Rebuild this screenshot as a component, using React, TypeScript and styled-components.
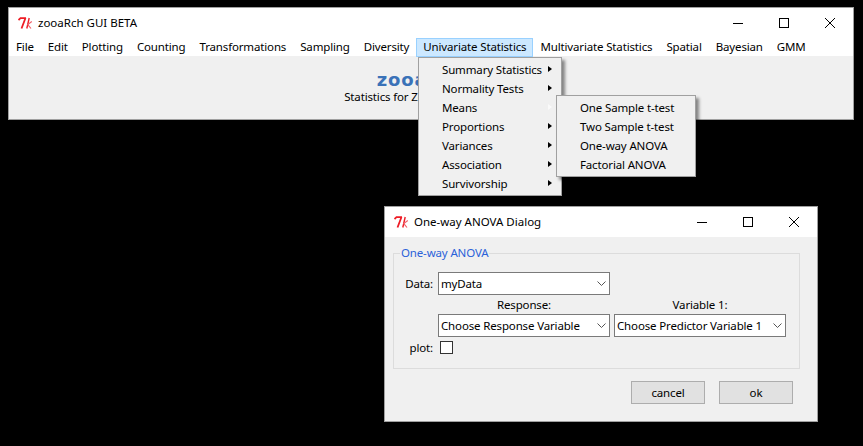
import React from 'react';
import styled, { createGlobalStyle } from 'styled-components';

const GlobalStyle = createGlobalStyle`
  html, body {
    margin: 0;
    background: #000;
  }
  body {
    font-family: "Noto Sans", "Open Sans", sans-serif;
    font-size: 11.5px;
    letter-spacing: -0.15px;
    color: #000;
  }
`;

const Desktop = styled.div`
  position: relative;
  width: 863px;
  height: 446px;
  overflow: hidden;
  background: #000;
`;

const Window = styled.div<{ $left: number; $top: number; $width: number; $height: number }>`
  position: absolute;
  left: ${(p) => p.$left}px;
  top: ${(p) => p.$top}px;
  width: ${(p) => p.$width}px;
  height: ${(p) => p.$height}px;
  box-sizing: border-box;
  border: 1px solid #a0a0a0;
  background: #f0f0f0;
  display: flex;
  flex-direction: column;
`;

const TitleBar = styled.div`
  height: 30px;
  flex: none;
  background: #fff;
  display: flex;
  align-items: center;
  padding-left: 9px;
`;

const TitleText = styled.span`
  margin-left: 5px;
  margin-bottom: 2px;
  letter-spacing: 0;
  white-space: nowrap;
`;

const Controls = styled.div`
  margin-left: auto;
  display: flex;
  height: 100%;
`;

const Control = styled.div`
  width: 46px;
  height: 100%;
  display: flex;
  align-items: center;
  justify-content: center;
`;

const MenuBar = styled.div`
  height: 18px;
  flex: none;
  background: #fff;
  display: flex;
`;

const MenuButton = styled.div<{ $active?: boolean }>`
  box-sizing: border-box;
  height: 19px;
  padding: 0 7px;
  line-height: 17px;
  white-space: nowrap;
  position: relative;
  z-index: 1;
  ${(p) => p.$active && 'background: #cce8ff; box-shadow: inset 0 0 0 1px #99d1ff;'}
`;

const Banner = styled.div`
  flex: 1;
  display: flex;
  flex-direction: column;
  align-items: center;
  padding-top: 15px;
`;

const Logo = styled.div`
  font-family: "DejaVu Sans", sans-serif;
  font-weight: 700;
  font-size: 18px;
  line-height: 18px;
  letter-spacing: 0.8px;
  padding-right: 18px;
  color: #3a72b8;
`;

const Tagline = styled.div`
  line-height: 16px;
  padding-right: 10px;
`;

const Dropdown = styled.div<{ $left: number; $top: number; $width: number }>`
  position: absolute;
  left: ${(p) => p.$left}px;
  top: ${(p) => p.$top}px;
  width: ${(p) => p.$width}px;
  box-sizing: border-box;
  padding: 2px 0;
  border: 1px solid #a0a0a0;
  background: #f0f0f0;
  box-shadow: 3px 3px 3px rgba(0, 0, 0, 0.45);
  z-index: 2;
`;

const DropItem = styled.div`
  position: relative;
  height: 19px;
  line-height: 19px;
  padding-left: 23px;
  white-space: nowrap;
`;

const Arrow = styled.span<{ $light?: boolean }>`
  position: absolute;
  top: 6px;
  right: 9px;
  width: 0;
  height: 0;
  border-style: solid;
  border-width: 3.5px 0 3.5px 4px;
  border-color: transparent transparent transparent ${(p) => (p.$light ? '#fafafa' : '#000')};
`;

const DialogBody = styled.div`
  flex: 1;
  padding: 16px 17px 0 8px;
`;

const Frame = styled.fieldset`
  position: relative;
  box-sizing: border-box;
  height: 116px;
  margin: 0;
  padding: 18px 0 0;
  border: 1px solid #dcdcdc;
  display: grid;
  grid-template-columns: 40px 172px 172px;
  grid-template-rows: 23px 19px 23px 20px;
  column-gap: 4px;
  align-items: center;
`;

const Legend = styled.span`
  position: absolute;
  top: -9px;
  left: 6px;
  padding: 0 1px;
  line-height: 16px;
  color: #2b62d9;
  background: #f0f0f0;
`;

const FieldLabel = styled.label`
  text-align: right;
  padding-right: 1px;
  grid-column: 1;
`;

const ColumnLabel = styled.div`
  text-align: center;
`;

const Combo = styled.div`
  box-sizing: border-box;
  height: 23px;
  border: 1px solid #7a7a7a;
  background: #fff;
  display: flex;
  align-items: center;
  padding-left: 2px;
  white-space: nowrap;
`;

const Chevron = styled.svg`
  margin-left: auto;
  margin-right: 3px;
  flex: none;
`;

const Check = styled.div`
  width: 13px;
  height: 13px;
  box-sizing: border-box;
  border: 1px solid #333;
  background: #fff;
  margin-left: 2px;
`;

const Footer = styled.div`
  display: flex;
  justify-content: flex-end;
  gap: 14px;
  margin-top: 12px;
  padding-right: 7px;
`;

const Button = styled.div`
  box-sizing: border-box;
  width: 74px;
  height: 23px;
  line-height: 21px;
  text-align: center;
  border: 1px solid #adadad;
  background: #e1e1e1;
`;

const TkIcon = () => (
  <svg width="15" height="12" viewBox="0 0 15 12" fill="none" stroke="#ee1c25">
    <path d="M0.5 3 L2.5 1.2 H8 M7.5 1 L3.5 11.5" strokeWidth="1.8" />
    <path d="M11.2 1 L8.8 11.5" strokeWidth="1.4" />
    <path d="M13.8 4.5 L9.8 7.5 L13 11.5" strokeWidth="1.2" stroke="#f0606a" />
  </svg>
);

const WindowControls = () => (
  <Controls>
    <Control>
      <svg width="10" height="10" viewBox="0 0 10 10">
        <path d="M0 5.5H10" stroke="#000" />
      </svg>
    </Control>
    <Control>
      <svg width="10" height="10" viewBox="0 0 10 10">
        <rect x="0.5" y="0.5" width="9" height="9" fill="none" stroke="#000" />
      </svg>
    </Control>
    <Control>
      <svg width="10" height="10" viewBox="0 0 10 10">
        <path d="M0 0L10 10M10 0L0 10" stroke="#000" />
      </svg>
    </Control>
  </Controls>
);

const ComboBox = ({ value }: { value: string }) => (
  <Combo>
    {value}
    <Chevron width="9" height="5" viewBox="0 0 9 5">
      <path d="M0.5 0.5L4.5 4.5L8.5 0.5" fill="none" stroke="#555" />
    </Chevron>
  </Combo>
);

const menus = ['File', 'Edit', 'Plotting', 'Counting', 'Transformations', 'Sampling', 'Diversity', 'Univariate Statistics', 'Multivariate Statistics', 'Spatial', 'Bayesian', 'GMM'];
const statItems = ['Summary Statistics', 'Normality Tests', 'Means', 'Proportions', 'Variances', 'Association', 'Survivorship'];
const meanItems = ['One Sample t-test', 'Two Sample t-test', 'One-way ANOVA', 'Factorial ANOVA'];

export default function App() {
  return (
    <Desktop>
      <GlobalStyle />
      <Window $left={8} $top={7} $width={846} $height={113}>
        <TitleBar>
          <TkIcon />
          <TitleText>zooaRch GUI BETA</TitleText>
          <WindowControls />
        </TitleBar>
        <MenuBar>
          {menus.map((m) => (
            <MenuButton key={m} $active={m === 'Univariate Statistics'}>{m}</MenuButton>
          ))}
        </MenuBar>
        <Banner>
          <Logo>zooaRch</Logo>
          <Tagline>Statistics for Zooarchaeologists</Tagline>
        </Banner>
      </Window>

      <Dropdown $left={418} $top={57} $width={144}>
        {statItems.map((m) => (
          <DropItem key={m}>
            {m}
            <Arrow $light={m === 'Means'} />
          </DropItem>
        ))}
      </Dropdown>
      <Dropdown $left={556} $top={95} $width={140}>
        {meanItems.map((m) => (
          <DropItem key={m}>{m}</DropItem>
        ))}
      </Dropdown>

      <Window $left={384} $top={206} $width={434} $height={216}>
        <TitleBar>
          <TkIcon />
          <TitleText>One-way ANOVA Dialog</TitleText>
          <WindowControls />
        </TitleBar>
        <DialogBody>
          <Frame>
            <Legend>One-way ANOVA</Legend>
            <FieldLabel>Data:</FieldLabel>
            <ComboBox value="myData" />
            <span />
            <span />
            <ColumnLabel>Response:</ColumnLabel>
            <ColumnLabel>Variable 1:</ColumnLabel>
            <span />
            <ComboBox value="Choose Response Variable" />
            <ComboBox value="Choose Predictor Variable 1" />
            <FieldLabel>plot:</FieldLabel>
            <Check />
          </Frame>
          <Footer>
            <Button>cancel</Button>
            <Button>ok</Button>
          </Footer>
        </DialogBody>
      </Window>
    </Desktop>
  );
}
